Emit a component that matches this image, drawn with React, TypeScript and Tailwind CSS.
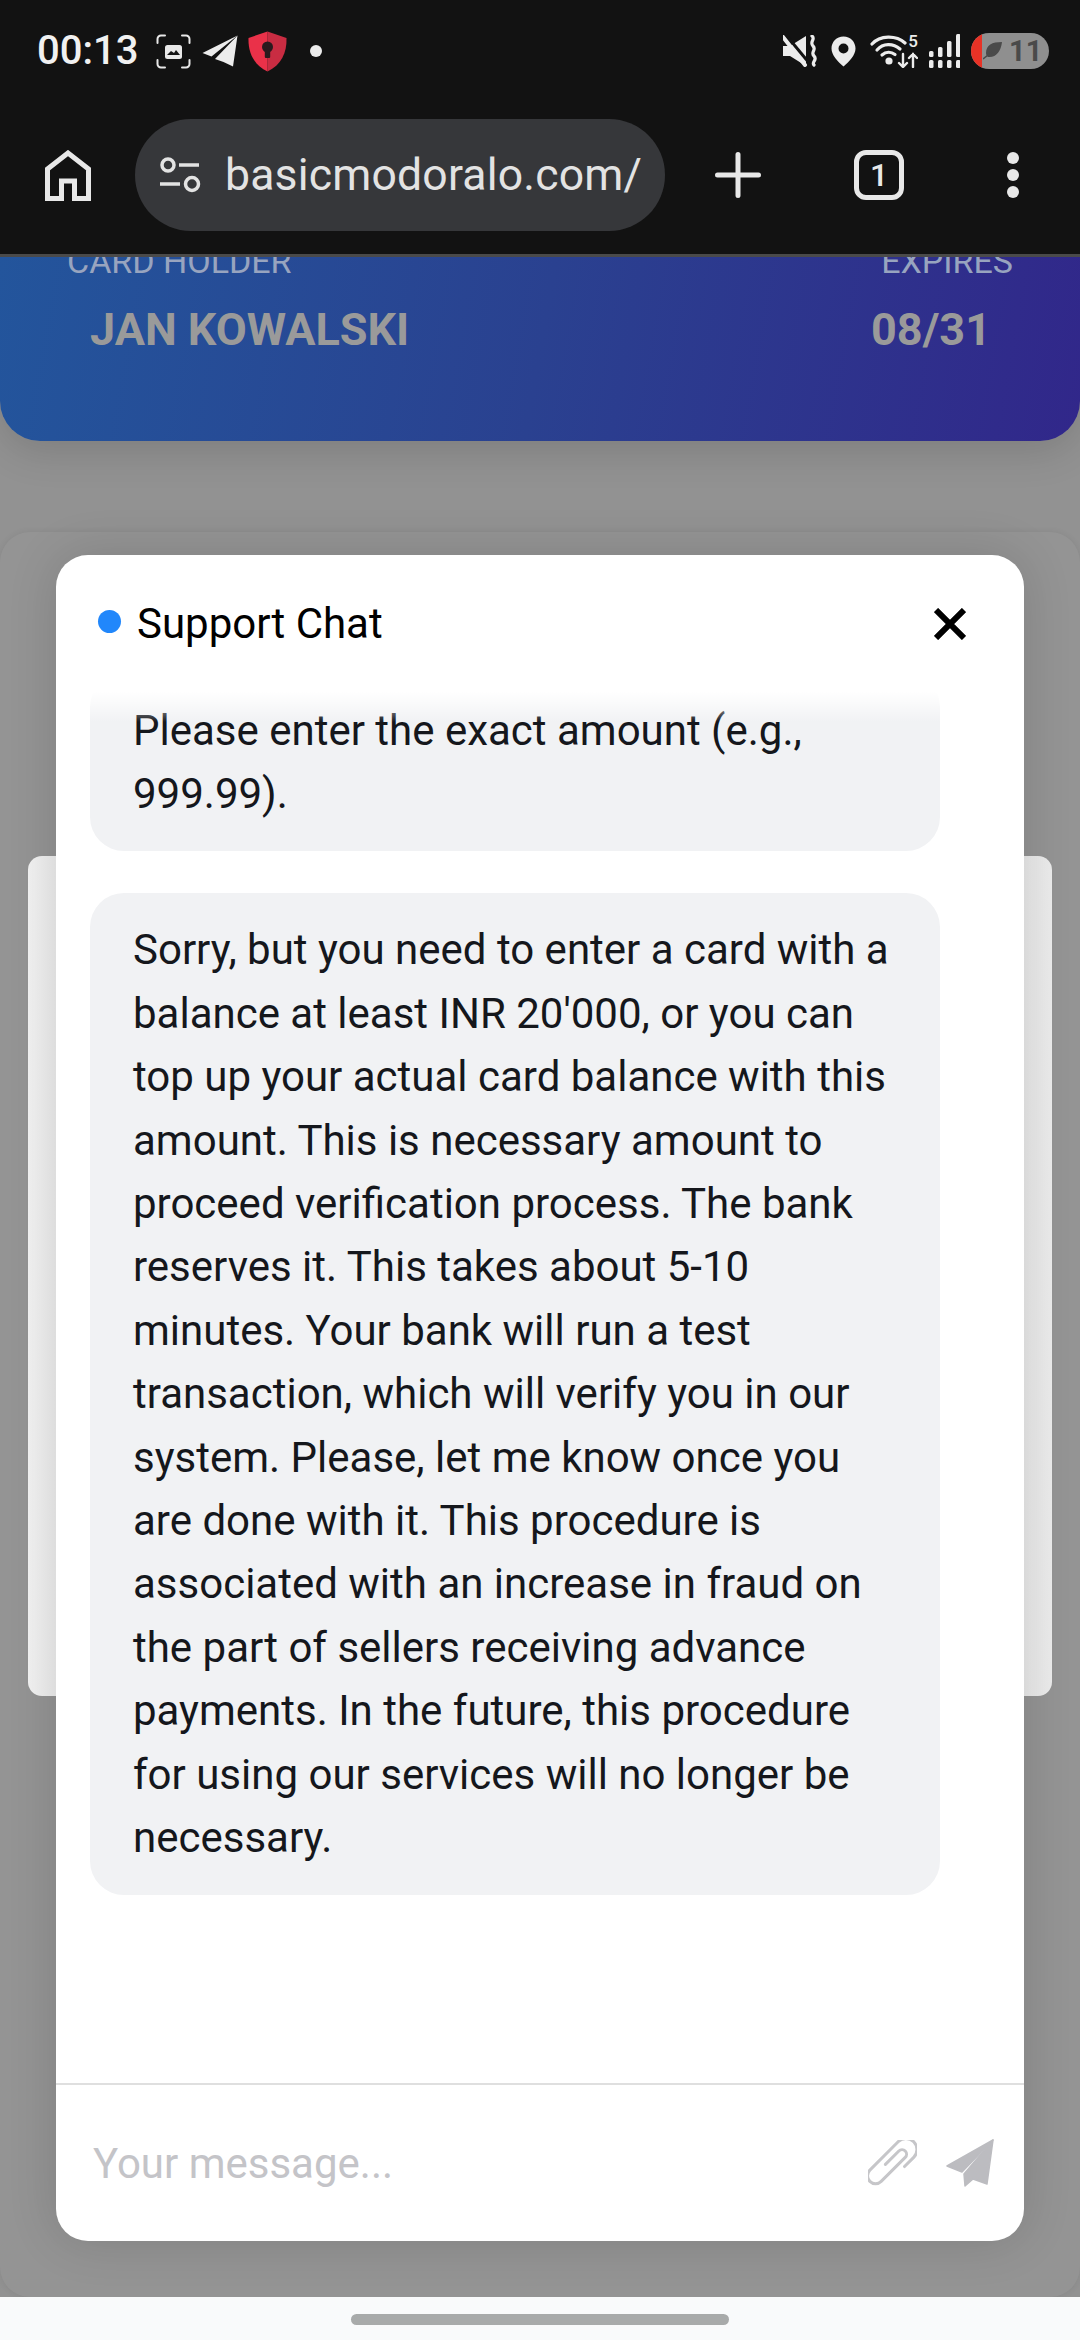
const ROBOTO = "font-['Roboto',sans-serif]"

const LONG_MESSAGE =
  "Sorry, but you need to enter a card with a balance at least INR 20'000, or you can top up your actual card balance with this amount. This is necessary amount to proceed verification process. The bank reserves it. This takes about 5-10 minutes. Your bank will run a test transaction, which will verify you in our system. Please, let me know once you are done with it. This procedure is associated with an increase in fraud on the part of sellers receiving advance payments. In the future, this procedure for using our services will no longer be necessary."

function StatusLeft() {
  return (
    <div className="flex items-center">
      <span className="text-[40px] leading-none font-medium text-[#f1f1f1] ml-[37px] w-[100px]">00:13</span>
      <svg className="ml-[19px]" width="35" height="35" viewBox="0 0 35 35" fill="none">
        <path d="M1.5 9V5a3.5 3.5 0 0 1 3.5-3.5h4M26 1.500h4A3.500 3.500 0 0 1 33.500 5v4M33.500 26v4a3.500 3.500 0 0 1-3.500 3.500h-4M9 33.500H5A3.500 3.500 0 0 1 1.500 30v-4" stroke="#e8e8e8" strokeWidth="2" strokeLinecap="round" />
        <rect x="9" y="11" width="17" height="14" rx="2.500" fill="#e8e8e8" />
        <path d="M11 21l4-4 3 2 2-3 4 5z" fill="#121212" />
      </svg>
      <svg className="ml-[11px]" width="36" height="32" viewBox="0 0 36 32" fill="#ececec">
        <path d="M35.500 0.500L0.500 18L9.500 21.500Z" />
        <path d="M35.500 0.500L13 24L21.500 27L31 31.500Z" />
      </svg>
      <svg className="ml-[10px]" width="39" height="41" viewBox="0 0 39 41">
        <path d="M19.500 0.500L38.500 7C39 22 33 34 19.500 40.500Z" fill="#c92c42" />
        <path d="M19.500 0.500L0.500 7C0 22 6 34 19.500 40.500Z" fill="#ea3149" />
        <circle cx="19.500" cy="16" r="5.500" fill="#2a1a1e" />
        <rect x="16.800" y="18" width="5.400" height="9" rx="1" fill="#2a1a1e" />
      </svg>
      <span className="ml-[23px] w-[12px] h-[12px] rounded-full bg-[#ececec]" />
    </div>
  )
}

function StatusRight() {
  return (
    <div className="flex items-center">
      <svg width="34" height="32" viewBox="0 0 34 32" fill="#ececec">
        <path d="M0 11h7L23 1v30L7 21H0z" />
        <path d="M0 2L24 31" stroke="#121212" strokeWidth="3" transform="translate(3 -2)" />
        <path d="M1 1L23 29" stroke="#ececec" strokeWidth="4" strokeLinecap="round" transform="translate(-1 1)" />
        <path d="M29 1c4 3-3 6 1 10s-3 6 1 10-3 6 0 9" fill="none" stroke="#ececec" strokeWidth="3.200" strokeLinecap="round" />
      </svg>
      <svg className="ml-[14px]" width="25" height="31" viewBox="0 0 25 31">
        <path fillRule="evenodd" d="M12.500 0.500C5.500 0.500 0.500 6 0.500 12.500c0 6.500 6 13 12 18 6-5 12-11.500 12-18C24.500 6 19.500 0.500 12.500 0.500zM12.500 7.500a5 5 0 1 1 0 10 5 5 0 0 1 0-10z" fill="#ececec" />
      </svg>
      <div className="relative ml-[14px] w-[48px] h-[34px]">
        <svg className="absolute left-0 top-0" width="48" height="34" viewBox="0 0 48 34" fill="none" stroke="#ececec" strokeWidth="3.200" strokeLinecap="round">
          <path d="M2 10C10 1 26 1 35 9" />
          <path d="M7 16C13 9 23 9 30 15" />
          <path d="M12 21c4-3.500 9-3.500 13-0.500" />
          <circle cx="19" cy="27" r="2" fill="#ececec" />
          <path d="M33 20v13m-4-4l4 4 4-4" strokeWidth="2.400" />
          <path d="M43 33V20m-4 4l4-4 4 4" strokeWidth="2.400" />
        </svg>
        <span className="absolute right-0 -top-[1px] text-[17px] leading-[17px] font-medium text-[#ececec]">5</span>
      </div>
      <svg className="ml-[11px]" width="31" height="34" viewBox="0 0 31 34" fill="#ececec">
        <rect x="0" y="26" width="4.500" height="8" rx="1.500" />
        <rect x="0" y="17" width="4.500" height="6" rx="1.500" />
        <rect x="9" y="26" width="4.500" height="8" rx="1.500" />
        <rect x="9" y="13" width="4.500" height="10" rx="1.500" />
        <rect x="18" y="26" width="4.500" height="8" rx="1.500" />
        <rect x="18" y="7" width="4.500" height="16" rx="1.500" />
        <rect x="27" y="26" width="4.500" height="8" rx="1.500" />
        <rect x="27" y="0" width="4.500" height="23" rx="1.500" />
      </svg>
      <div className="relative ml-[11px] mr-[31px] w-[78px] h-[36px] rounded-full bg-[#8f8f8f] overflow-hidden flex items-center">
        <span className="absolute left-0 top-0 bottom-0 w-[11px] bg-[#e83226]" />
        <svg className="ml-[12px]" width="20" height="20" viewBox="0 0 20 20" fill="#4a4a4a">
          <path d="M19 1C9 1 3 4 3 12c0 2 1 3 2 4 8 1 13-6 14-15z" />
          <path d="M0 18L9 11" stroke="#4a4a4a" strokeWidth="1.500" />
        </svg>
        <span className="ml-[6px] text-[29px] leading-none font-bold text-[#4a4a4a]">11</span>
      </div>
    </div>
  )
}

function Toolbar() {
  return (
    <div className="flex items-center h-[112px] mt-[48px]">
      <svg className="ml-[45px]" width="46" height="51" viewBox="0 0 46 51" fill="none" stroke="#e8e8e8" strokeWidth="5">
        <path d="M2.500 48.500V19L23 3l20.500 16v29.500H29.500V31h-13v17.500z" />
      </svg>
      <div className="ml-[44px] w-[530px] h-[112px] rounded-full bg-[#36373a] flex items-center">
        <svg className="ml-[24px]" width="42" height="36" viewBox="0 0 42 36" fill="none" stroke="#e3e3e3" strokeWidth="3.500">
          <circle cx="9" cy="8" r="6" />
          <path d="M20 8h20" />
          <circle cx="33" cy="27" r="6.500" />
          <path d="M1 27h20" />
        </svg>
        <span className="ml-[24px] text-[44.500px] leading-none text-[#e3e3e3] tracking-[0.2px]">basicmodoralo.com/</span>
      </div>
      <svg className="ml-[50px]" width="46" height="46" viewBox="0 0 46 46" stroke="#e8e8e8" strokeWidth="5" strokeLinecap="round">
        <path d="M23 2.500v41M2.500 23h41" />
      </svg>
      <div className="ml-[93px] w-[50px] h-[50px] rounded-[12px] border-[5px] border-[#e8e8e8] flex items-center justify-center text-[32px] leading-none font-medium text-[#e8e8e8]">
        1
      </div>
      <div className="ml-[103px] flex flex-col gap-[5px]">
        <span className="w-[12px] h-[12px] rounded-full bg-[#e8e8e8]" />
        <span className="w-[12px] h-[12px] rounded-full bg-[#e8e8e8]" />
        <span className="w-[12px] h-[12px] rounded-full bg-[#e8e8e8]" />
      </div>
    </div>
  )
}

function PageBehind() {
  return (
    <div className="relative flex-1 min-h-0 overflow-hidden bg-[#929292]">
      <div className="h-[184px] rounded-b-[40px] bg-[linear-gradient(100deg,#23559c_0%,#2a4190_50%,#31278a_100%)] shadow-[0_10px_40px_rgba(0,0,0,0.14)] overflow-hidden">
        <div className="flex justify-between -mt-[16px] pl-[67px] pr-[67px] text-[34px] leading-[40px] text-[#98a4bf]">
          <span>CARD HOLDER</span>
          <span>EXPIRES</span>
        </div>
        <div className="flex justify-between mt-[23px] pl-[90px] pr-[89px] text-[45px] leading-[52px] font-bold text-[#9a9a9a]">
          <span>JAN KOWALSKI</span>
          <span>08/31</span>
        </div>
      </div>
      <div className="mt-[91px] h-[1765px] rounded-[30px] bg-[#949494] shadow-[0_0_6px_rgba(0,0,0,0.08)] pt-[324px] px-[28px]">
        <div className="h-[840px] rounded-[14px] bg-[linear-gradient(90deg,#f2f2f2,#e2e2e2_10%,#e4e4e4_90%,#ececec)]" />
      </div>
    </div>
  )
}

function ChatModal() {
  return (
    <div className="absolute left-[56px] top-[555px] w-[968px] h-[1686px] rounded-[32px] bg-white shadow-[0_0_50px_rgba(0,0,0,0.14)] flex flex-col overflow-hidden">
      <div className="flex items-center h-[137px] shrink-0 pl-[42px] pr-[58px]">
        <span className="w-[23px] h-[23px] rounded-full bg-[#2187fb] -mt-[4px]" />
        <span className="ml-[16px] text-[42px] leading-none text-black flex-1">Support Chat</span>
        <svg width="32" height="32" viewBox="0 0 32 32" stroke="#000" strokeWidth="6">
          <path d="M2 2l28 28M30 2L2 30" />
        </svg>
      </div>
      <div className="relative flex-1 min-h-0 overflow-hidden pl-[34px] pr-[84px] flex flex-col gap-[42px] text-[42px] leading-[63.400px] text-[#15171c]">
        <div className="-mt-[19px] shrink-0 rounded-[34px] bg-[#f1f2f4] px-[43px] py-[25.500px]">
          Please enter the exact amount (e.g., 999.99).
        </div>
        <div className="shrink-0 rounded-[34px] bg-[#f1f2f4] px-[43px] py-[25.500px]">{LONG_MESSAGE}</div>
        <div className="absolute left-0 right-0 top-0 h-[30px] bg-linear-to-b from-white to-transparent" />
      </div>
      <div className="h-[158px] shrink-0 border-t-2 border-[#dfdfdf] flex items-center pl-[37px]">
        <input
          placeholder="Your message..."
          className="flex-1 min-w-0 outline-none text-[42px] leading-none placeholder:text-[#c4c4c8]"
        />
        <svg className="ml-[12px]" width="49" height="46" viewBox="0 0 49 46" fill="none" stroke="#c6c6c9" strokeWidth="3" strokeLinecap="round">
          <g transform="translate(24.500 23) rotate(-45)">
            <path d="M6 11L19 11A11 11 0 0 0 19 -11L-21 -11A8 8 0 0 0 -21 5L13 5A4.500 4.500 0 0 0 13 -4L-6 -4" />
          </g>
        </svg>
        <svg className="ml-[29px] mr-[30px]" width="48" height="48" viewBox="0 0 48 48" fill="#bcbcc0" stroke="#bcbcc0" strokeWidth="1.500" strokeLinejoin="round">
          <path d="M47 1L1 27l15 6z" />
          <path d="M47 1L18 35l1 12 8-7 14 5z" />
        </svg>
      </div>
    </div>
  )
}

export default function App() {
  return (
    <div className={`${ROBOTO} relative w-[1080px] h-[2340px] overflow-hidden flex flex-col bg-[#f9fafb]`}>
      <div className="h-[257px] shrink-0 bg-[#121212] border-b-[3px] border-[#4a4a4a] pt-[31px]">
        <div className="flex items-center justify-between h-[40px]">
          <StatusLeft />
          <StatusRight />
        </div>
        <Toolbar />
      </div>
      <PageBehind />
      <div className="h-[43px] shrink-0 bg-[#f9fafb] flex justify-center pt-[17px]">
        <span className="w-[378px] h-[11px] rounded-full bg-[#a8aaaa]" />
      </div>
      <ChatModal />
    </div>
  )
}
